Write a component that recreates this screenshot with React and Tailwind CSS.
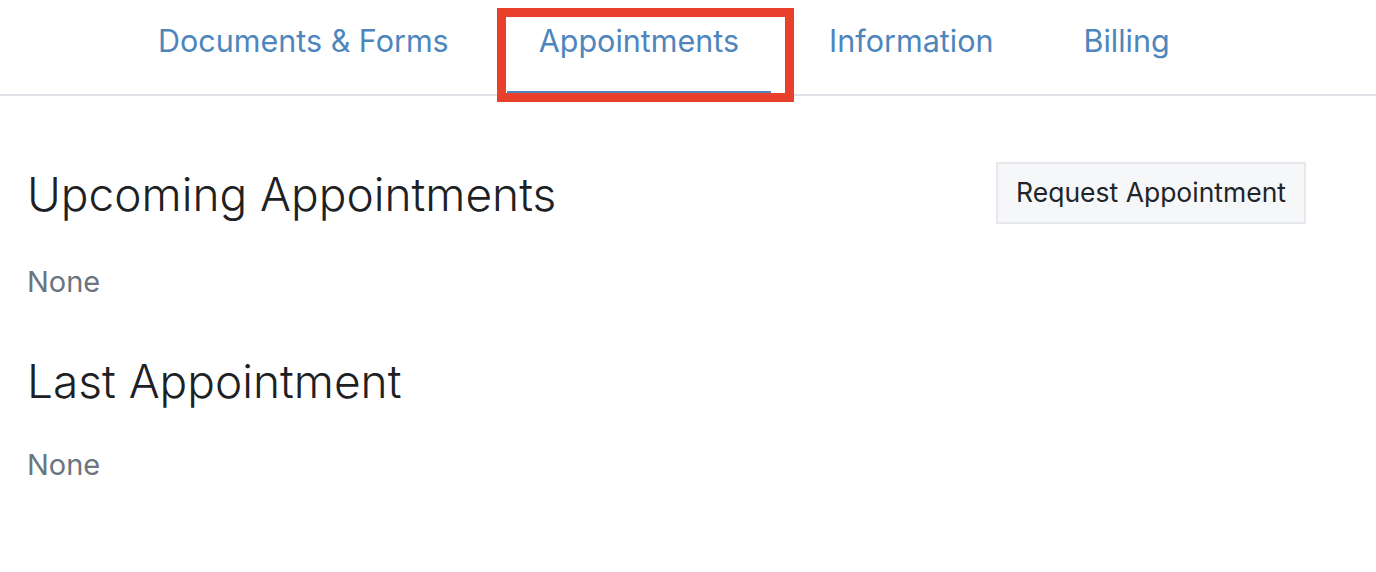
import { useState } from 'react';

const TABS = ['Documents & Forms', 'Appointments', 'Information', 'Billing'];

export default function App() {
  const [active, setActive] = useState('Appointments');

  return (
    <div className="min-h-screen bg-white" style={{ fontFamily: 'Inter, "Noto Sans", sans-serif' }}>
      {/* Tabs */}
      <div className="border-b-2 border-[#dee1e5]">
        <nav className="flex gap-[26px] pl-[126px]">
          {TABS.map(t => (
            <div key={t} className="relative">
              <button
                onClick={() => setActive(t)}
                className={`h-[94px] px-8 pb-[10px] text-[30.5px] text-[#4e86bc] border-b-[3px] ${
                  active === t ? 'border-[#4e86bc]' : 'border-transparent'
                }`}>
                {t}
              </button>
              {active === t && (
                <div className="absolute -left-[10px] -right-[23px] top-2 h-[94px] border-[9px] border-[#e8402a] pointer-events-none" />
              )}
            </div>
          ))}
        </nav>
      </div>

      {/* Content */}
      <div className="px-[27px] pr-[70px] pt-[70px]">
        <div className="flex items-start justify-between">
          <h2 className="text-[46px] font-light text-[#1d2124] leading-tight">Upcoming Appointments</h2>
          <button className="-mt-[4px] h-[62px] px-[18px] bg-[#f6f7f9] border-2 border-[#e6e8eb] text-[26.5px] text-[#212529]">
            Request Appointment
          </button>
        </div>
        <p className="mt-[36px] text-[29px] text-[#6c757d]">None</p>

        <h2 className="mt-[49px] text-[46px] font-light text-[#1d2124] leading-tight">Last Appointment</h2>
        <p className="mt-[33px] text-[29px] text-[#6c757d]">None</p>
      </div>
    </div>
  );
}
